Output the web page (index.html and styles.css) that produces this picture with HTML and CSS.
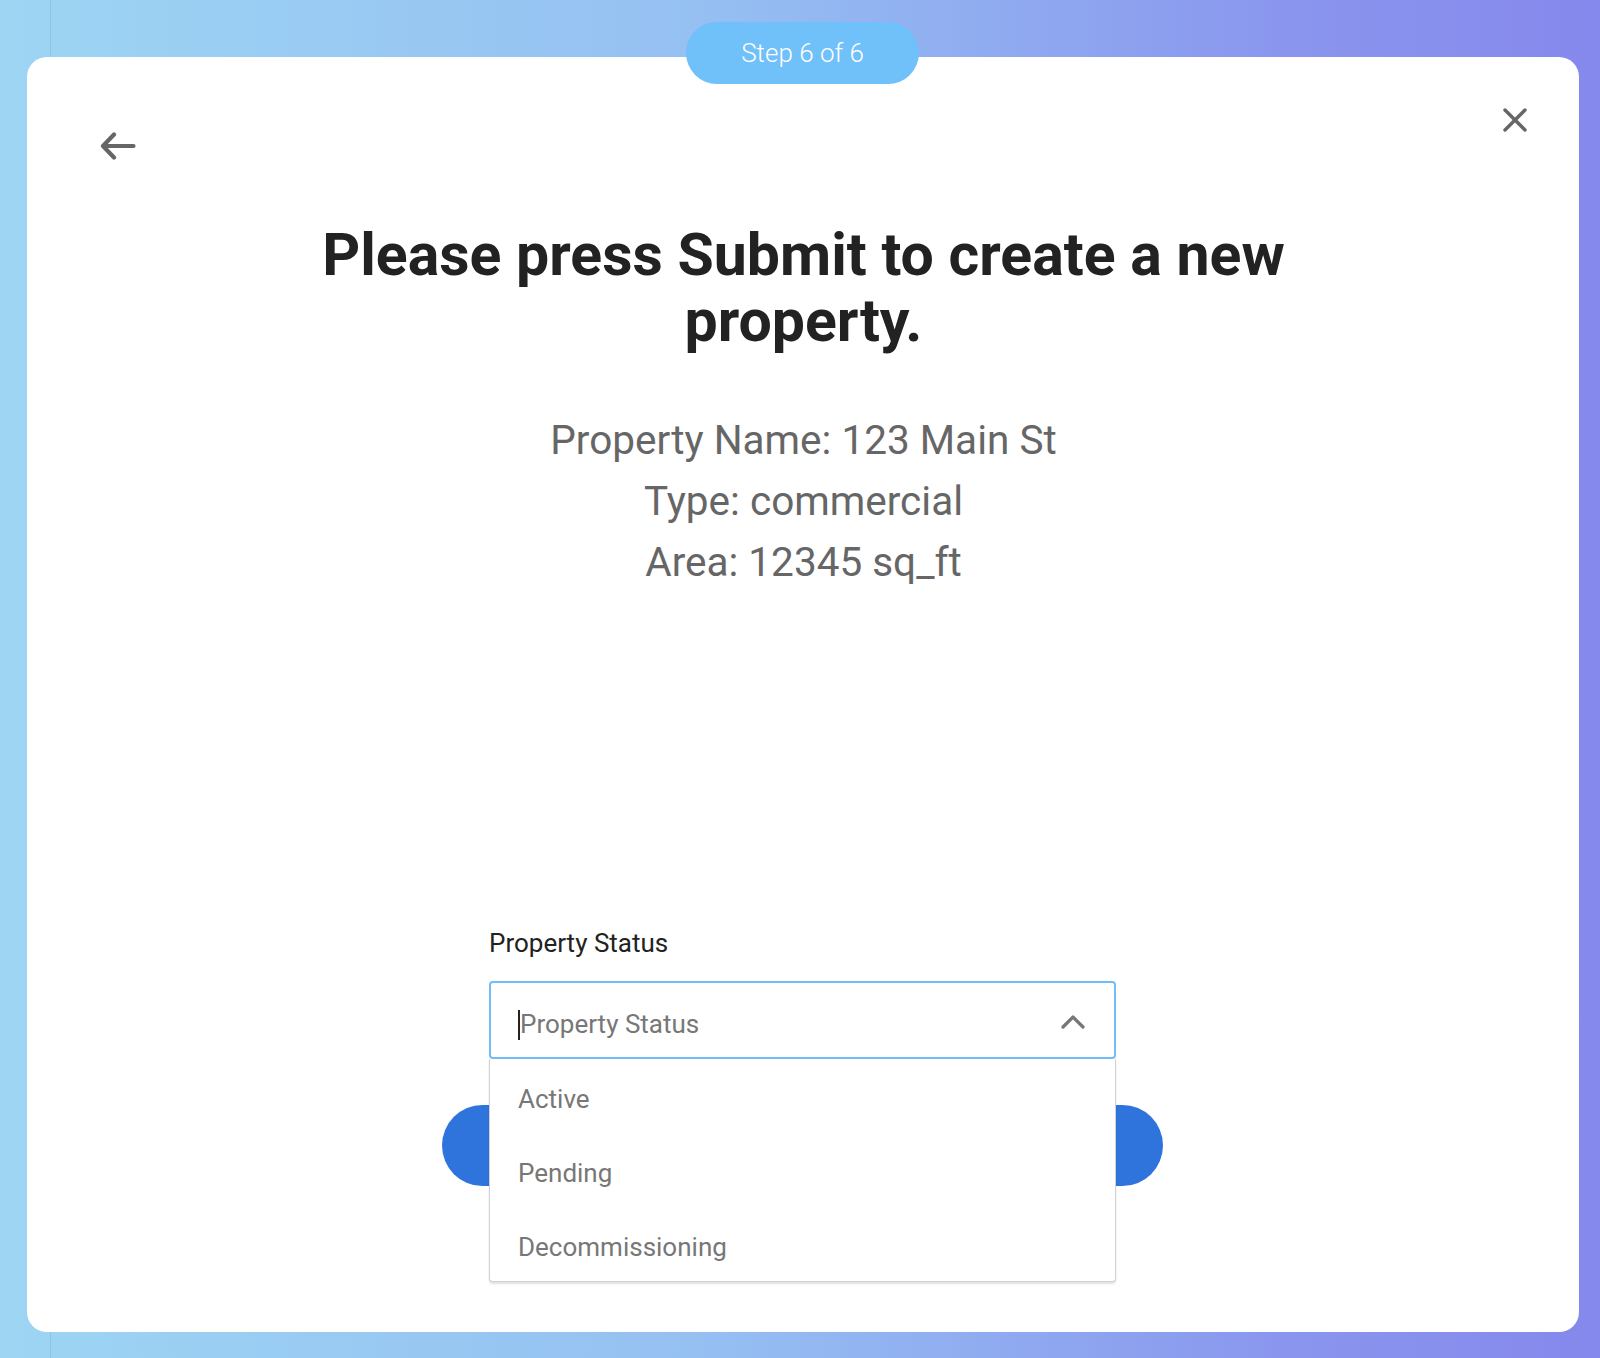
FILE: index.html
```html
<!DOCTYPE html>
<html lang="en">
<head>
    <meta charset="UTF-8" />
    <meta name="viewport" content="width=device-width, initial-scale=1.0"/>
    <title>New Property - Step 6 of 6</title>
    <link rel="stylesheet" href="styles.css">
</head>
<body>
    <div class="modal">
        <div class="step-pill">Step 6 of 6</div>

        <div class="modal-top">
            <button class="icon-btn back-btn" aria-label="Back">
                <svg width="36" height="28" viewBox="0 0 36 28" fill="none" stroke="#666" stroke-width="4.2" stroke-linecap="round" stroke-linejoin="round">
                    <path d="M33.5 14H3.5"/>
                    <path d="M14 2.5L3 14L14 25.5"/>
                </svg>
            </button>
            <button class="icon-btn close-btn" aria-label="Close">
                <svg width="24" height="24" viewBox="0 0 24 24" fill="none" stroke="#666" stroke-width="3.4" stroke-linecap="round">
                    <path d="M2 2L22 22"/>
                    <path d="M22 2L2 22"/>
                </svg>
            </button>
        </div>

        <h1 class="title">Please press Submit to create a new property.</h1>

        <div class="summary">
            <div>Property Name: 123 Main St</div>
            <div>Type: commercial</div>
            <div>Area: 12345 sq_ft</div>
        </div>

        <div class="form">
            <label class="field-label">Property Status</label>
            <div class="select-wrap">
                <div class="select-box">
                    <span class="cursor"></span>
                    <span class="placeholder">Property Status</span>
                    <svg class="chevron" width="24" height="14" viewBox="0 0 24 14" fill="none" stroke="#777" stroke-width="3.2" stroke-linecap="round" stroke-linejoin="round">
                        <path d="M2 12L12 2L22 12"/>
                    </svg>
                </div>
                <ul class="options">
                    <li>Active</li>
                    <li>Pending</li>
                    <li>Decommissioning</li>
                </ul>
            </div>
        </div>

        <div class="actions">
            <button class="btn">Back</button>
            <button class="btn">Submit</button>
        </div>
    </div>
</body>
</html>
```

FILE: styles.css
```css
html, body {
    height: 100%;
}
body {
    position: relative;
    margin: 0;
    font-family: Roboto, "Liberation Sans", Arial, sans-serif;
    background: linear-gradient(90deg, #9dd5f3 0%, #95bff2 45%, #8a96ee 80%, #8588ec 100%);
    padding: 57px 21px 26px 27px;
    box-sizing: border-box;
}
/* faint page behind the dialog */
body::before {
    content: "";
    position: absolute;
    top: 0;
    bottom: 0;
    left: 50px;
    width: 1px;
    background-color: rgba(120, 175, 225, 0.45);
}
.modal {
    position: relative;
    height: 1275px;
    background-color: #ffffff;
    border-radius: 20px;
    box-sizing: border-box;
    padding: 51px 52px 0 73px;
}
.step-pill {
    position: absolute;
    top: -35px;
    left: 659px;
    width: 233px;
    height: 62px;
    border-radius: 31px;
    background-color: #70c0fa;
    color: #ffffff;
    font-weight: 300;
    font-size: 26px;
    display: flex;
    align-items: center;
    justify-content: center;
}
.modal-top {
    display: flex;
    justify-content: space-between;
    align-items: flex-start;
    height: 114px;
}
.icon-btn {
    background: none;
    border: none;
    padding: 0;
    cursor: pointer;
    display: block;
}
.back-btn {
    margin-top: 24px;
}
.back-btn svg, .close-btn svg {
    display: block;
}
.title {
    margin: 0 auto;
    width: 1100px;
    text-align: center;
    font-size: 59px;
    line-height: 66px;
    font-weight: 700;
    color: #222222;
    transform: translateX(-10px);
}
.summary {
    margin-top: 56px;
    text-align: center;
    font-size: 40.5px;
    line-height: 61px;
    color: #666666;
    transform: translateX(-10px);
}
.form {
    position: relative;
    z-index: 2;
    width: 627px;
    margin: 331px auto 0;
    transform: translateX(-11px);
}
.field-label {
    display: block;
    font-size: 26px;
    line-height: 38px;
    color: #222222;
}
.select-wrap {
    position: relative;
    margin-top: 19px;
}
.select-box {
    height: 78px;
    border: 2px solid #72bcf8;
    border-radius: 4px;
    box-sizing: border-box;
    display: flex;
    align-items: center;
    padding: 8px 29px 0 27px;
}
.cursor {
    width: 2px;
    height: 30px;
    background-color: #222;
    margin-top: 2px;
}
.placeholder {
    flex: 1;
    font-size: 26px;
    color: #777777;
}
.chevron {
    margin-top: -4px;
}
.options {
    position: absolute;
    top: 78px;
    left: 0;
    right: 0;
    margin: 0;
    padding: 0;
    list-style: none;
    background-color: #ffffff;
    border: 1px solid #d2d2d6;
    border-top: none;
    border-radius: 0 0 4px 4px;
    box-shadow: 0 2px 2px rgba(0, 0, 0, 0.12);
}
.options li {
    height: 74px;
    line-height: 80px;
    padding-left: 28px;
    font-size: 26px;
    color: #777777;
}
.actions {
    width: 721px;
    margin: 46px auto 0;
    display: flex;
    justify-content: space-between;
    transform: translateX(-11px);
}
.btn {
    width: 340px;
    height: 81px;
    border: none;
    border-radius: 41px;
    background-color: #2f74dd;
    color: #ffffff;
    font-family: inherit;
    font-size: 26px;
    cursor: pointer;
}
```
